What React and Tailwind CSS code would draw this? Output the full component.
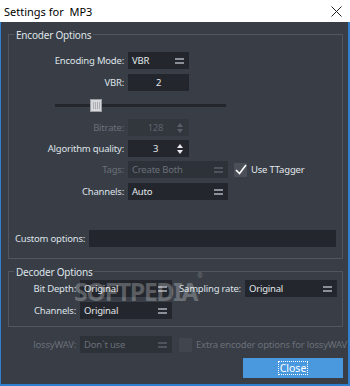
import React from 'react';

function MenuBars({ dim }) {
  return (
    <div className="flex flex-col gap-[2px]">
      <div className={'w-[9px] h-[2px] ' + (dim ? 'bg-[#4e545c]' : 'bg-[#8b9098]')} />
      <div className={'w-[9px] h-[2px] ' + (dim ? 'bg-[#4e545c]' : 'bg-[#8b9098]')} />
    </div>
  );
}

function Combo({ value, w, disabled }) {
  return (
    <div
      className={
        'h-[17px] flex items-center justify-between pl-[4px] pr-[5px] whitespace-nowrap ' +
        (disabled ? 'bg-[#2d3138] text-[#6a7078]' : 'bg-[#23272d] text-[#e4e7eb]')
      }
      style={{ width: w }}
    >
      <span>{value}</span>
      <MenuBars dim={disabled} />
    </div>
  );
}

function Spin({ value, disabled }) {
  const c = disabled ? 'border-[#5a6068]' : 'border-[#e8eaed]';
  return (
    <div
      className={
        'w-[61px] h-[17px] flex items-center pr-[6px] ' +
        (disabled ? 'bg-[#32363d] text-[#5e646c]' : 'bg-[#23272d] text-[#e4e7eb]')
      }
    >
      <span className="flex-1 text-center pl-[6px]">{value}</span>
      <div className="flex flex-col gap-[2px]">
        <div className={'w-0 h-0 border-x-[3px] border-x-transparent border-b-[4px] ' + c} />
        <div className={'w-0 h-0 border-x-[3px] border-x-transparent border-t-[4px] ' + c} />
      </div>
    </div>
  );
}

function Row({ label, lw, dim, children, className = '' }) {
  return (
    <div className={'flex items-center h-[17px] ' + className}>
      <div
        className={'text-right shrink-0 whitespace-nowrap ' + (dim ? 'text-[#6a7078]' : 'text-[#dfe3e8]')}
        style={{ width: lw }}
      >
        {label}
      </div>
      <div className="ml-[4px] flex items-center">{children}</div>
    </div>
  );
}

function Check({ checked }) {
  return (
    <div className={'w-[13px] h-[14px] flex items-center justify-center ' + (checked ? 'bg-[#4b5058]' : 'bg-[#41464e]')}>
      {checked && (
        <svg width="12" height="11" viewBox="0 0 12 11">
          <path d="M1 6 L4.5 9.5 L11 1" fill="none" stroke="#ffffff" strokeWidth="1.6" />
        </svg>
      )}
    </div>
  );
}

export default function App() {
  return (
    <div className="w-[350px] h-[386px] flex flex-col font-['Noto_Sans',sans-serif] text-[9.5px] tracking-[-0.2px] leading-none bg-[#2f7fcf]">
      <div className="h-[22px] bg-white flex items-center justify-between pl-[4px] pr-[8px] text-[11px] tracking-normal text-black">
        <span>Settings for&nbsp; MP3</span>
        <svg width="11" height="11" viewBox="0 0 11 11">
          <path d="M0.5 0.5 L10.5 10.5 M10.5 0.5 L0.5 10.5" stroke="#222" strokeWidth="1" />
        </svg>
      </div>

      <div className="relative flex-1 mx-[1px] mr-[2px] mb-[2px] bg-[#383d46] px-[7px] pr-[5px] pt-[12px] flex flex-col">
        {/* Encoder group */}
        <div className="relative border border-[#50565f] h-[225px] flex flex-col">
          <div className="absolute -top-[7px] left-[5px] px-[2px] bg-[#383d46] text-[#dfe3e8] text-[10px] leading-[14px]">
            Encoder Options
          </div>
          <Row label="Encoding Mode:" lw={115} className="mt-[17px]">
            <Combo value="VBR" w={61} />
          </Row>
          <Row label="VBR:" lw={115} className="mt-[5px]">
            <div className="w-[61px] h-[17px] bg-[#23272d] text-[#e4e7eb] flex items-center justify-center">2</div>
          </Row>
          <div className="mt-[8px] h-[13px] ml-[46px] w-[171px] flex items-center">
            <div className="relative w-full h-[3px] bg-[#23272d]">
              <div className="absolute left-[35px] -top-[5px] w-[12px] h-[13px] bg-[#d6d8db] border border-[#9a9ea4] flex items-center justify-center gap-[1px]">
                <div className="w-[1px] h-[7px] bg-[#a9adb2]" />
                <div className="w-[1px] h-[7px] bg-[#a9adb2]" />
                <div className="w-[1px] h-[7px] bg-[#a9adb2]" />
                <div className="w-[1px] h-[7px] bg-[#a9adb2]" />
              </div>
            </div>
          </div>
          <Row label="Bitrate:" lw={115} dim className="mt-[7px]">
            <Spin value="128" disabled />
          </Row>
          <Row label="Algorithm quality:" lw={115} className="mt-[4px]">
            <Spin value="3" />
          </Row>
          <Row label="Tags:" lw={115} dim className="mt-[4px]">
            <Combo value="Create Both" w={100} disabled />
            <div className="ml-[6px]">
              <Check checked />
            </div>
            <span className="ml-[4px] text-[#e4e7eb] whitespace-nowrap">Use TTagger</span>
          </Row>
          <Row label="Channels:" lw={115} className="mt-[5px]">
            <Combo value="Auto" w={100} />
          </Row>
          <div className="mt-[30px] h-[17px] flex items-center pl-[6px] pr-[6px]">
            <span className="text-[#dfe3e8] whitespace-nowrap shrink-0">Custom options:</span>
            <div className="ml-[4px] flex-1 h-[17px] bg-[#23272d]" />
          </div>
        </div>

        {/* Decoder group */}
        <div className="relative mt-[12px] border border-[#50565f] h-[56px] flex flex-col">
          <div className="absolute -top-[7px] left-[5px] px-[2px] bg-[#383d46] text-[#dfe3e8] text-[10px] leading-[14px]">
            Decoder Options
          </div>
          <Row label="Bit Depth:" lw={67} className="mt-[8px]">
            <Combo value="Original" w={92} />
            <span className="ml-[7px] text-[#dfe3e8] whitespace-nowrap">Sampling rate:</span>
            <div className="ml-[4px]">
              <Combo value="Original" w={92} />
            </div>
          </Row>
          <Row label="Channels:" lw={67} className="mt-[5px]">
            <Combo value="Original" w={92} />
          </Row>
        </div>

        <div className="mt-[9px] pl-[1px]">
          <Row label="lossyWAV:" lw={67} dim>
            <Combo value="Don`t use" w={92} disabled />
            <div className="ml-[7px]">
              <Check />
            </div>
            <span className="ml-[4px] text-[#6a7078] whitespace-nowrap">Extra encoder options for lossyWAV</span>
          </Row>
        </div>

        <div className="mt-[5px] flex justify-end">
          <div className="w-[100px] h-[20px] bg-[#4a98de] flex items-center justify-center">
            <span className="text-white text-[10.5px] tracking-normal border border-dotted border-white px-[1px] py-[1px]">Close</span>
          </div>
        </div>

        <div className="absolute left-[73px] top-[257px] text-[25px] leading-none font-bold text-white/25 tracking-[-1.5px] pointer-events-none whitespace-nowrap">
          SOFTPEDIA<sup className="text-[7px] align-top tracking-normal">®</sup>
        </div>
      </div>
    </div>
  );
}
